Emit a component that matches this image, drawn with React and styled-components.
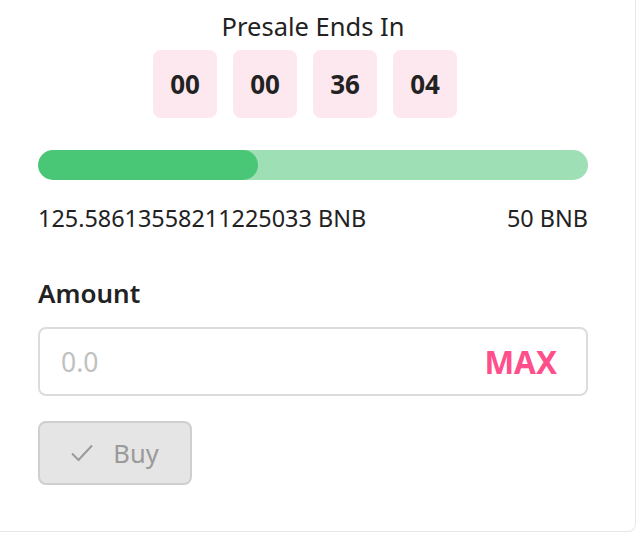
import React from 'react'
import styled, { createGlobalStyle } from 'styled-components'

const GlobalStyle = createGlobalStyle`
  body {
    margin: 0;
    background: #fff;
    font-family: "Noto Sans", "Open Sans", sans-serif;
    color: #222;
  }
`

const Card = styled.div`
  width: 636px;
  height: 532px;
  box-sizing: border-box;
  border-bottom: 1px solid #e6e6e6;
  border-right: 1px solid #e6e6e6;
  border-bottom-right-radius: 8px;
  padding: 10px 47px 0 38px;
`

const Title = styled.div`
  text-align: center;
  font-size: 25.5px;
  line-height: 32px;
`

const Countdown = styled.div`
  display: flex;
  justify-content: center;
  margin-top: 8px;
`

const TimeBox = styled.div`
  width: 64px;
  height: 68px;
  margin-right: 16px;
  border-radius: 8px;
  background: #fde8ef;
  display: flex;
  align-items: center;
  justify-content: center;
  font-weight: 700;
  font-size: 26px;
`

const Track = styled.div`
  margin-top: 32px;
  height: 30px;
  border-radius: 15px;
  background: #9fdfb5;
  overflow: hidden;
`

const Fill = styled.div`
  height: 100%;
  border-radius: 15px;
  background: #4ac776;
`

const Stats = styled.div`
  display: flex;
  justify-content: space-between;
  margin-top: 24px;
  font-size: 23.4px;
  line-height: 28px;
`

const Label = styled.div`
  margin-top: 46px;
  font-size: 26px;
  font-weight: 600;
  line-height: 30px;
`

const InputWrap = styled.div`
  margin-top: 19px;
  height: 69px;
  box-sizing: border-box;
  border: 2px solid #dcdcdc;
  border-radius: 8px;
  display: flex;
  align-items: center;
  padding: 0 29px 0 21px;
`

const Input = styled.input`
  flex: 1;
  min-width: 0;
  border: none;
  outline: none;
  background: transparent;
  font-family: inherit;
  font-size: 26.5px;
  color: #222;
  padding: 0;
  &::placeholder {
    color: #c0c0c0;
  }
`

const MaxButton = styled.button`
  border: none;
  background: none;
  padding: 0;
  font-family: inherit;
  font-weight: 700;
  font-size: 31.5px;
  color: #ff4f8b;
  cursor: pointer;
`

const BuyButton = styled.button`
  margin-top: 25px;
  width: 154px;
  height: 64px;
  box-sizing: border-box;
  border: 2px solid #cfcfcf;
  border-radius: 8px;
  background: #e5e5e5;
  color: #9a9a9a;
  font-family: inherit;
  font-size: 25.5px;
  display: flex;
  align-items: center;
  justify-content: center;
  gap: 20px;
  padding: 0 0 1px;
`

export default function App() {
  const time = ['00', '00', '36', '04']
  const progress = 40

  return (
    <>
      <GlobalStyle />
      <Card>
        <Title>Presale Ends In</Title>
        <Countdown>
          {time.map((t, i) => (
            <TimeBox key={i}>{t}</TimeBox>
          ))}
        </Countdown>
        <Track>
          <Fill style={{ width: `${progress}%` }} />
        </Track>
        <Stats>
          <span>125.58613558211225033 BNB</span>
          <span>50 BNB</span>
        </Stats>
        <Label>Amount</Label>
        <InputWrap>
          <Input placeholder="0.0" />
          <MaxButton>MAX</MaxButton>
        </InputWrap>
        <BuyButton disabled>
          <svg width="22" height="18" viewBox="0 0 22 18" fill="none">
            <path d="M1 9.5 L7.5 16 L21 1.5" stroke="#9a9a9a" strokeWidth="2" />
          </svg>
          Buy
        </BuyButton>
      </Card>
    </>
  )
}
